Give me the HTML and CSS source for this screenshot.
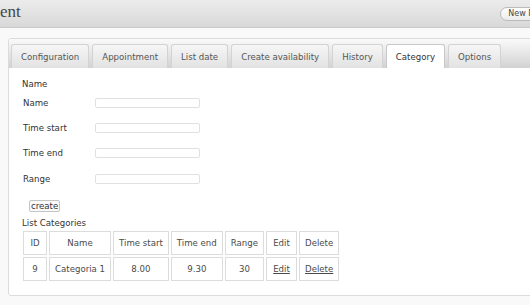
FILE: index.html
```html
<!DOCTYPE html>
<html>
<head>
    <title>Appointment</title>
    <meta name="viewport" content="width=device-width, initial-scale=1">
    <link rel="stylesheet" href="styles.css">
</head>
<body>
<div class="page">
    <div class="header">
        <h2>ent</h2>
        <a class="add-new" href="#">New Post</a>
    </div>

    <div class="tabs">
        <ul class="tab-nav">
            <li>Configuration</li>
            <li>Appointment</li>
            <li>List date</li>
            <li>Create availability</li>
            <li>History</li>
            <li class="active">Category</li>
            <li>Options</li>
        </ul>

        <div class="tab-panel">
            <h3>Name</h3>
            <div class="field-row">
                <label for="cat-name">Name</label>
                <input type="text" id="cat-name">
            </div>
            <div class="field-row">
                <label for="cat-start">Time start</label>
                <input type="text" id="cat-start">
            </div>
            <div class="field-row">
                <label for="cat-end">Time end</label>
                <input type="text" id="cat-end">
            </div>
            <div class="field-row">
                <label for="cat-range">Range</label>
                <input type="text" id="cat-range">
            </div>
            <button class="create-btn">create</button>

            <h3 class="list-title">List Categories</h3>
            <table class="cat-table">
                <tr>
                    <td class="col-id">ID</td>
                    <td>Name</td>
                    <td>Time start</td>
                    <td>Time end</td>
                    <td>Range</td>
                    <td class="col-edit">Edit</td>
                    <td>Delete</td>
                </tr>
                <tr>
                    <td class="col-id">9</td>
                    <td>Categoria 1</td>
                    <td>8.00</td>
                    <td>9.30</td>
                    <td>30</td>
                    <td class="col-edit"><a href="#">Edit</a></td>
                    <td><a href="#">Delete</a></td>
                </tr>
            </table>
        </div>
    </div>
</div>
</body>
</html>
```

FILE: styles.css
```css
html, body {
    overflow: hidden;
}
body {
    margin: 0;
    background-color: #f9f9f9;
    font-family: "DejaVu Sans", Verdana, sans-serif;
    font-size: 8.6px;
    color: #333;
}
.page {
    width: 560px;
}
.header {
    display: flex;
    justify-content: space-between;
    align-items: flex-start;
    height: 27px;
    padding-right: 7px;
    background: linear-gradient(#ececec, #d8d8d8);
    border-bottom: 1px solid #c9c9c9;
}
.header h2 {
    margin: 0;
    font-family: "Liberation Serif", serif;
    font-weight: normal;
    font-size: 17px;
    line-height: 24px;
    color: #464646;
}
.add-new {
    margin-top: 7px;
    padding: 0 7px;
    height: 12px;
    line-height: 12px;
    font-size: 8px;
    color: #464646;
    text-decoration: none;
    border: 1px solid #bbb;
    border-radius: 8px;
    background: linear-gradient(#fefefe, #ececec);
}
.tabs {
    margin: 10px 0 0 8px;
    border: 1px solid #dcdcdc;
    border-radius: 3px;
    background-color: #fff;
}
.tab-nav {
    display: flex;
    gap: 3px;
    margin: 0;
    padding: 5px 0 0 2px;
    list-style: none;
    background: linear-gradient(#fafafa, #d2d2d2);
    border-radius: 3px 3px 0 0;
}
.tab-nav li {
    height: 23px;
    line-height: 24px;
    padding: 0 9px;
    color: #555;
    border: 1px solid #d3d3d3;
    border-bottom: none;
    border-radius: 3px 3px 0 0;
    background: linear-gradient(#f6f6f6, #e2e2e2);
}
.tab-nav li.active {
    color: #333;
    background: #fff;
    border-color: #c8c8c8;
}
.tab-panel {
    padding: 11px 13px 12px;
}
.tab-panel h3 {
    margin: 0;
    font-size: 8.6px;
    font-weight: normal;
    line-height: 11px;
}
.field-row {
    display: flex;
    align-items: center;
    height: 25.3px;
}
.field-row label {
    width: 72px;
    padding-left: 1px;
}
.field-row input {
    box-sizing: border-box;
    width: 105px;
    height: 10px;
    padding: 0;
    border: 1px solid #e0e0e0;
    border-radius: 2px;
    background-color: #fff;
}
.create-btn {
    display: block;
    margin: 9px 0 0 7px;
    padding: 0 1px;
    height: 12px;
    line-height: 10px;
    font-family: inherit;
    font-size: 8.6px;
    color: #333;
    border: 1px solid #c4c4c4;
    border-radius: 2px;
    background-color: #fafafa;
}
.tab-panel h3.list-title {
    margin-top: 6px;
}
.cat-table {
    border-collapse: separate;
    border-spacing: 2px;
    margin-left: -1px;
}
.cat-table td {
    height: 22px;
    padding: 0 5px;
    text-align: center;
    color: #4a4a4a;
    border: 1px solid #dcdcdc;
}
.cat-table .col-id {
    width: 12px;
}
.cat-table .col-edit {
    width: 19px;
}
.cat-table a {
    color: #4a4a4a;
}
```
